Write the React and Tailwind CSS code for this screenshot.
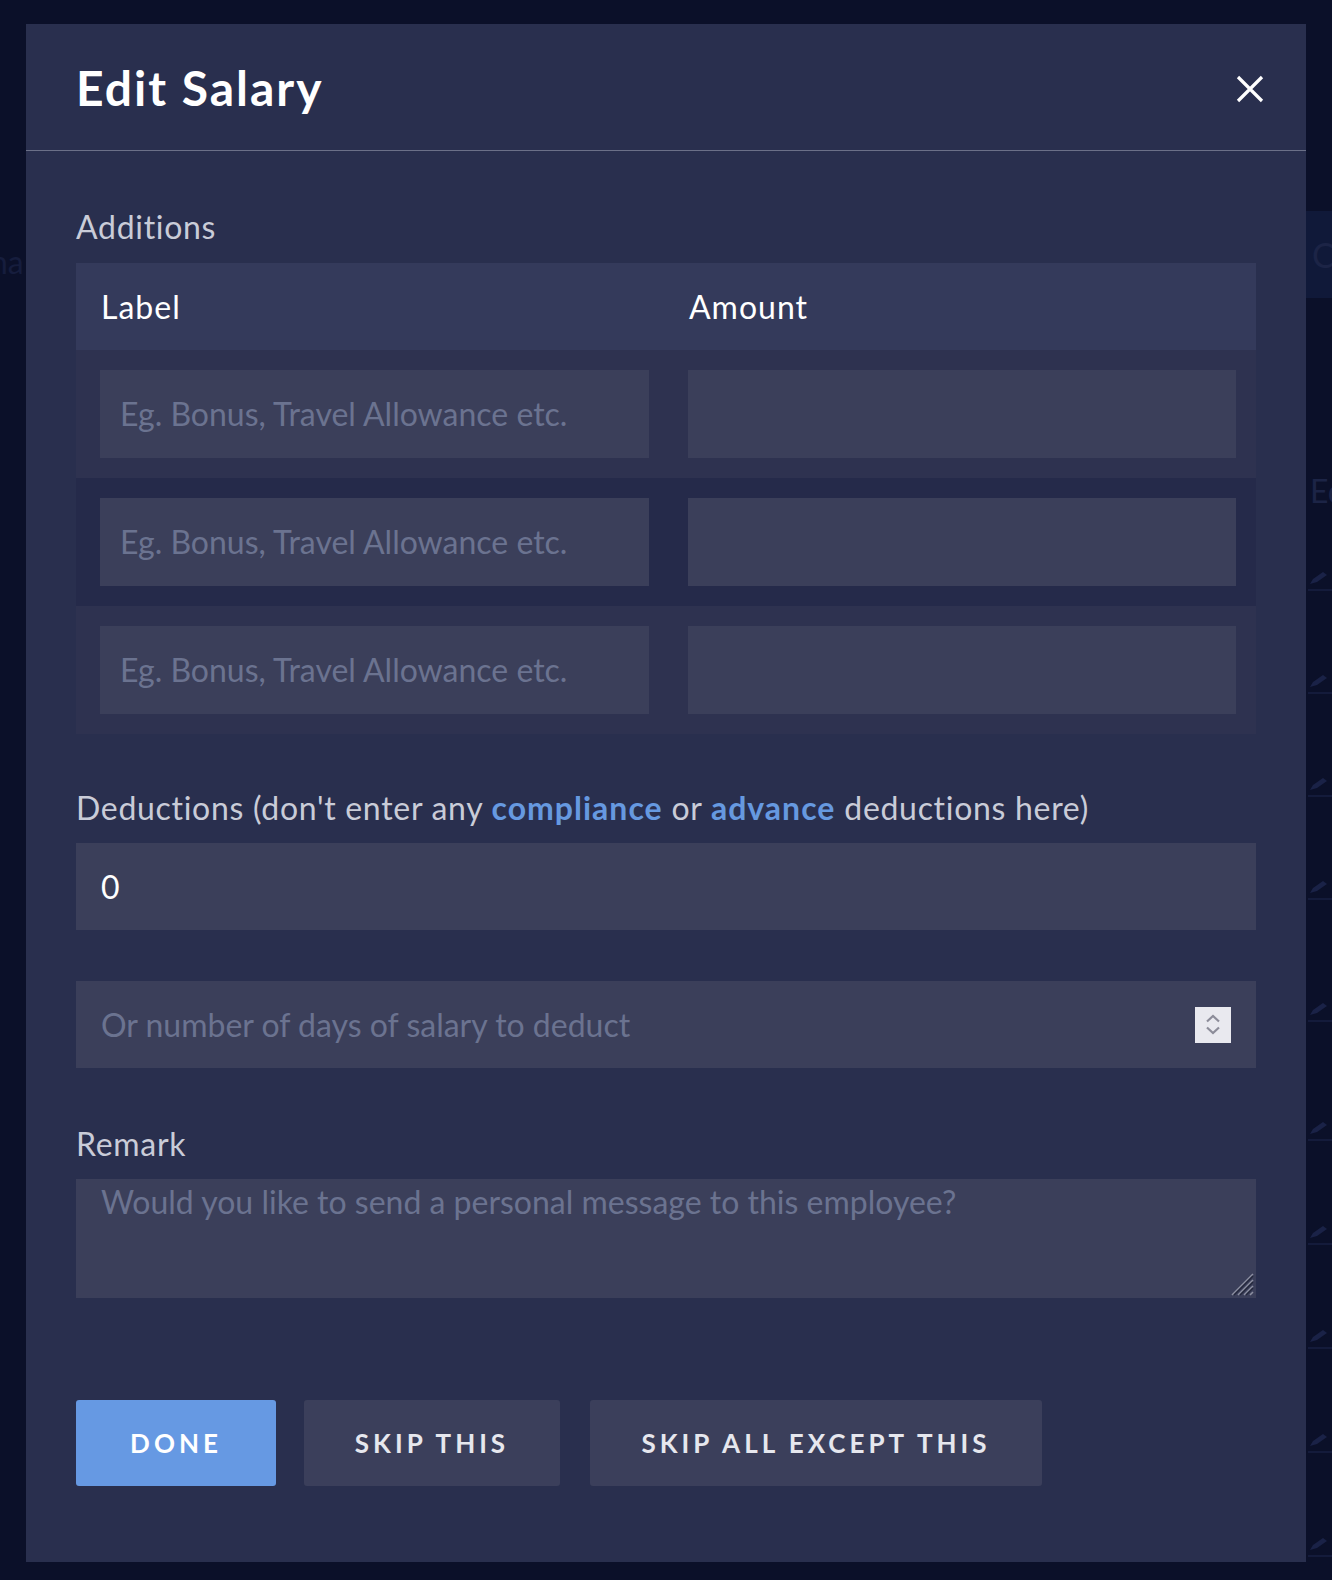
import React from 'react';

const FONT = { fontFamily: 'Lato, "Open Sans", sans-serif' };

const PLACEHOLDER = 'Eg. Bonus, Travel Allowance etc.';

const Pencil = () => (
    <svg width="22" height="16" viewBox="0 0 22 16" className="block">
        <path d="M2 14 L5 9 L15 2 L19 5 L9 12 Z" fill="#1a2247" />
    </svg>
);

const Spinner = () => (
    <div className="w-[36px] h-[36px] bg-[#e9e9ef] flex flex-col items-center justify-center gap-[3px]">
        <svg width="16" height="9" viewBox="0 0 16 9">
            <path d="M2 7.5 L8 2 L14 7.5" fill="none" stroke="#8c8c99" strokeWidth="2.2" />
        </svg>
        <svg width="16" height="9" viewBox="0 0 16 9">
            <path d="M2 1.5 L8 7 L14 1.5" fill="none" stroke="#8c8c99" strokeWidth="2.2" />
        </svg>
    </div>
);

const ResizeHandle = () => (
    <svg width="26" height="26" viewBox="0 0 26 26" className="absolute right-[2px] bottom-[2px]">
        <path d="M4 25 L25 4 M10 25 L25 10 M16 25 L25 16 M22 25 L25 22" stroke="#8b8ea0" strokeWidth="1.6" />
        <path d="M6 25 L25 6 M12 25 L25 12 M18 25 L25 18" stroke="#22263a" strokeWidth="1.4" />
    </svg>
);

const AdditionRow = ({ shade }) => (
    <div className={`grid grid-cols-2 py-[20px] ${shade}`}>
        <div className="pl-[24px] pr-[17px]">
            <div className="h-[88px] bg-[#3b3f5a] flex items-center pl-[20px] text-[32px] tracking-normal text-[#6b7390] whitespace-nowrap">
                {PLACEHOLDER}
            </div>
        </div>
        <div className="pl-[22px] pr-[20px]">
            <div className="h-[88px] bg-[#3b3f5a]"></div>
        </div>
    </div>
);

const Button = ({ children, primary, width }) => (
    <div
        className={`h-[86px] rounded-[3px] flex items-center justify-center text-[26px] font-bold tracking-[4px] ${width} ${primary ? 'bg-[#6699e3] text-white' : 'bg-[#3b3f5b] text-[#e6e7ee]'}`}
    >
        {children}
    </div>
);

const BackdropRight = () => (
    <div className="flex-1 flex flex-col overflow-hidden text-[#1c2446]">
        <div className="h-[211px]"></div>
        <div className="h-[87px] bg-[#101939] flex items-center pl-[6px] text-[34px] whitespace-nowrap">Cl</div>
        <div className="h-[176px]"></div>
        <div className="h-[34px] pl-[4px] text-[32px] leading-[34px] whitespace-nowrap">Edi</div>
        <div className="flex flex-col">
            {[62, 82, 82, 82, 101, 98, 83, 83, 83, 83].map((gap, i) => (
                <div key={i} style={{ marginTop: gap }} className="pl-[2px]">
                    <Pencil />
                    <div className="h-[2px] bg-[#141b3b] mt-[3px]"></div>
                </div>
            ))}
        </div>
    </div>
);

const App = () => {
    return (
        <div style={FONT} className="w-[1332px] h-[1580px] bg-[#0b1029] flex overflow-hidden">
            {/* left backdrop strip */}
            <div className="w-[26px] shrink-0 overflow-hidden">
                <div className="mt-[238px] text-[32px] text-[#161d3d] whitespace-nowrap -ml-[10px]">na</div>
            </div>

            {/* modal */}
            <div className="w-[1280px] shrink-0 mt-[24px] h-[1538px] bg-[#292f4e]">
                <div className="h-[127px] border-b border-[#6b7088] flex items-center justify-between pl-[50px] pr-[40px]">
                    <h1 className="text-[48px] font-bold tracking-[2px] text-white leading-none pt-[2px]">Edit Salary</h1>
                    <svg width="30" height="30" viewBox="0 0 30 30" className="mr-[1px] mt-[4px]">
                        <path d="M3 3 L27 27 M27 3 L3 27" stroke="#ffffff" strokeWidth="3.2" />
                    </svg>
                </div>

                <div className="px-[50px] pt-[58px] text-[32px] tracking-[0.7px]">
                    <div className="leading-[36px] text-[#c9ccd8]">Additions</div>

                    <div className="mt-[18px]">
                        <div className="h-[87px] bg-[#343a5b] grid grid-cols-2 items-center text-white tracking-[1px]">
                            <div className="pl-[25px]">Label</div>
                            <div className="pl-[23px]">Amount</div>
                        </div>
                        <AdditionRow shade="bg-[#2e3250]" />
                        <AdditionRow shade="bg-[#252a4a]" />
                        <AdditionRow shade="bg-[#2e3250]" />
                    </div>

                    <div className="mt-[56px] leading-[36px] text-[#c9ccd8] whitespace-nowrap">
                        Deductions (don't enter any <span className="font-bold tracking-[1px] text-[#6699e0]">compliance</span> or{' '}
                        <span className="font-bold tracking-[1px] text-[#6699e0]">advance</span> deductions here)
                    </div>

                    <div className="mt-[17px] h-[87px] bg-[#3b3f5a] flex items-center pl-[25px] text-white">
                        0
                    </div>

                    <div className="mt-[51px] h-[87px] bg-[#3b3f5a] flex items-center justify-between pl-[25px] pr-[25px] text-[#6b7390] tracking-normal">
                        <span>Or number of days of salary to deduct</span>
                        <Spinner />
                    </div>

                    <div className="mt-[58px] leading-[36px] text-[#c9ccd8]">Remark</div>

                    <div className="relative mt-[17px] h-[119px] bg-[#3b3f5a] pl-[25px] pt-[5px] leading-[36px] text-[#6b7390] tracking-normal">
                        Would you like to send a personal message to this employee?
                        <ResizeHandle />
                    </div>

                    <div className="mt-[102px] flex tracking-normal">
                        <Button primary width="w-[200px]">DONE</Button>
                        <div className="ml-[28px]"><Button width="w-[256px]">SKIP THIS</Button></div>
                        <div className="ml-[30px]"><Button width="w-[452px]">SKIP ALL EXCEPT THIS</Button></div>
                    </div>
                </div>
            </div>

            <BackdropRight />
        </div>
    );
};

export default App;
